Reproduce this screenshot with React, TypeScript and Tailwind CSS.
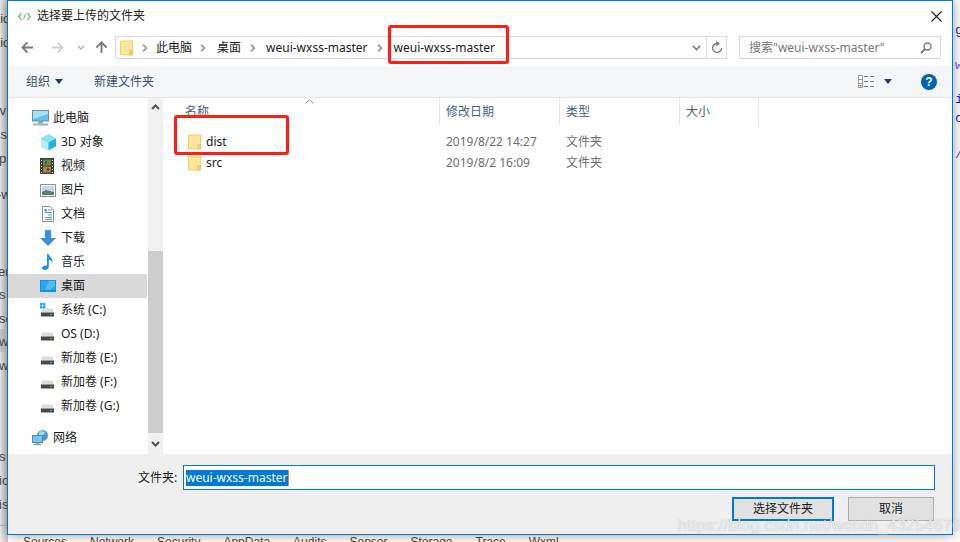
import React from "react";

const ui = "font-['Noto_Sans','Noto_Sans_CJK_SC',sans-serif]";

/* ---------- toolbar glyphs ---------- */
function Arrow({ dir, color }: { dir: "left" | "right" | "up"; color: string }) {
  const rot = dir === "left" ? 0 : dir === "right" ? 180 : 90;
  return (
    <svg width="13" height="13" viewBox="0 0 14 14" style={{ transform: `rotate(${rot}deg)` }}>
      <path d="M1.5 7H13M7 1.5L1.5 7L7 12.5" fill="none" stroke={color} strokeWidth="2" />
    </svg>
  );
}

function Chevron() {
  return (
    <svg width="6" height="8" viewBox="0 0 6 8">
      <path d="M1 .8L4.4 4L1 7.2" fill="none" stroke="#8a8a8a" strokeWidth="1.5" />
    </svg>
  );
}

function Caret({ color = "#2b3a55" }: { color?: string }) {
  return (
    <svg width="8" height="5" viewBox="0 0 8 5">
      <path d="M0 0H8L4 5Z" fill={color} />
    </svg>
  );
}

function Folder({ w = 14, h = 16 }: { w?: number; h?: number }) {
  return (
    <svg width={w} height={h} viewBox="0 0 14 16">
      <path d="M.5 .5H13.5V15.5H.5Z" fill="#fde69a" stroke="#eccb6a" />
      <path d="M10.5 11H13.5V15.5H10.5Z" fill="#f5d476" stroke="#e3bd55" strokeWidth=".7" />
    </svg>
  );
}

/* ---------- navigation pane glyphs ---------- */
function Monitor() {
  return (
    <svg width="17" height="16" viewBox="0 0 17 16">
      <rect x=".5" y=".5" width="16" height="10.5" fill="#5cc3f2" stroke="#6c8ca3" />
      <path d="M1 1H16V4L1 9Z" fill="#a5e2fa" />
      <rect x="6" y="11" width="5" height="2.5" fill="#9aa7b1" />
      <rect x="1" y="13.5" width="15" height="2" fill="#9fb0bd" />
    </svg>
  );
}

function Cube() {
  return (
    <svg width="17" height="17" viewBox="0 0 17 17">
      <path d="M8.5 .5L16 4.5V12.5L8.5 16.5L1 12.5V4.5Z" fill="#25b5d2" />
      <path d="M8.5 .5L16 4.5L8.5 8.5L1 4.5Z" fill="#8be4ee" />
      <path d="M1 4.5L8.5 8.5V16.5L1 12.5Z" fill="#b7f0f4" />
    </svg>
  );
}

function Film() {
  return (
    <svg width="14" height="16" viewBox="0 0 14 16">
      <rect width="14" height="16" fill="#3d3d3d" />
      <rect x="3" y="1.5" width="8" height="6" fill="#6a8a3c" />
      <rect x="3" y="8.5" width="8" height="6" fill="#b5822f" />
      <path d="M5 3h2v3H5zM7 10h2v3H7z" fill="#2a58a8" />
      <path d="M1 2h1v1H1zM1 5h1v1H1zM1 8h1v1H1zM1 11h1v1H1zM1 14h1v1H1zM12 2h1v1h-1zM12 5h1v1h-1zM12 8h1v1h-1zM12 11h1v1h-1zM12 14h1v1h-1z" fill="#eee" />
    </svg>
  );
}

function PictureIcon() {
  return (
    <svg width="16" height="13" viewBox="0 0 16 13">
      <rect x=".5" y=".5" width="15" height="12" fill="#fff" stroke="#8e9396" />
      <rect x="2" y="2" width="12" height="9" fill="#c3dbe4" />
      <path d="M2 8L6 6L14 8V11H2Z" fill="#5d8070" />
    </svg>
  );
}

function DocIcon() {
  return (
    <svg className="ml-[2px]" width="12" height="16" viewBox="0 0 12 16">
      <path d="M.5 .5H8L11.5 4V15.5H.5Z" fill="#fff" stroke="#8b8f92" />
      <path d="M6 4h4M3 6.5h7M6 9h4M3 11.5h7M3 13.5h7" stroke="#4f9ad4" />
      <rect x="2.5" y="3" width="2.5" height="2.5" fill="#4f9ad4" />
    </svg>
  );
}

function DownloadIcon() {
  return (
    <svg width="16" height="16" viewBox="0 0 16 16">
      <path d="M5 0H11V8H16L8 16L0 8H5Z" fill="#3d8fdc" />
    </svg>
  );
}

function NoteIcon() {
  return (
    <svg className="ml-[2px]" width="12" height="16" viewBox="0 0 12 16">
      <path d="M5 0H6.6C7 3 11.5 4 10.5 9C10 6.5 8 6 6.8 5.5V13C6.8 15 4.5 16 2.5 16C.8 16 0 15 0 14C0 12.3 2.5 11 5 11.6Z" fill="#1e90e0" />
    </svg>
  );
}

function DesktopIcon() {
  return (
    <svg width="16" height="12" viewBox="0 0 16 12">
      <rect width="16" height="12" fill="#1c8fe4" />
      <rect x="1" y="1" width="14" height="9" fill="#2ba6f4" />
      <path d="M9 1H15V5L10 10H5Z" fill="#55bdf8" />
    </svg>
  );
}

function Drive({ win }: { win?: boolean }) {
  return (
    <svg width="15" height="15" viewBox="0 0 15 15">
      {win && <path d="M0 0h2.5v2.5H0zM3 0h2.5v2.5H3zM0 3h2.5v2.5H0zM3 3h2.5v2.5H3z" fill="#18a7e8" />}
      <path d="M2.5 5.5H12.5L14 9.5H1Z" fill="#dcdcdc" />
      <rect x="1" y="9.5" width="13" height="4" fill="#4a4a4a" />
      <rect x="10.5" y="11" width="1.5" height="1" fill="#52e052" />
    </svg>
  );
}

function Globe() {
  return (
    <svg width="17" height="16" viewBox="0 0 17 16">
      <circle cx="10.5" cy="5.5" r="5.5" fill="#4e9ad0" />
      <path d="M7 2C9 0 12 1 13 3L10 6L7 5Z" fill="#a4d4ec" />
      <rect x=".5" y="5.5" width="10" height="7" fill="#6ec5f0" stroke="#5f8aa6" />
      <rect x="3.5" y="13" width="4" height="1" fill="#8fa3b1" />
      <rect x="1.5" y="14" width="8" height="1.2" fill="#8fa3b1" />
    </svg>
  );
}

/* ---------- navigation data ---------- */
const libraries: [React.ReactNode, string][] = [
  [<Cube />, "3D 对象"],
  [<Film />, "视频"],
  [<PictureIcon />, "图片"],
  [<DocIcon />, "文档"],
  [<DownloadIcon />, "下载"],
  [<NoteIcon />, "音乐"],
];

const drives: [boolean, string][] = [
  [true, "系统 (C:)"],
  [false, "OS (D:)"],
  [false, "新加卷 (E:)"],
  [false, "新加卷 (F:)"],
  [false, "新加卷 (G:)"],
];

function NavRow({ icon, label, active }: { icon: React.ReactNode; label: string; active?: boolean }) {
  return (
    <div className={`mr-px flex h-6 items-center pl-[32px] ${active ? "bg-[#d9d9d9]" : ""}`}>
      <span className="flex w-[21px] shrink-0 justify-start">{icon}</span>
      <span className="text-[12px] text-[#1a1a1a]">{label}</span>
    </div>
  );
}

function Nav() {
  return (
    <div className="flex w-[140px] shrink-0 flex-col pt-[8px]">
      <div className="flex h-6 items-center pl-[24px]">
        <span className="flex w-[21px] shrink-0 justify-start"><Monitor /></span>
        <span className="text-[12px] text-[#1a1a1a]">此电脑</span>
      </div>
      {libraries.map(([icon, label]) => (
        <NavRow key={label} icon={icon} label={label} />
      ))}
      <NavRow icon={<DesktopIcon />} label="桌面" active />
      {drives.map(([win, label]) => (
        <NavRow key={label} icon={<Drive win={win} />} label={label} />
      ))}
      <div className="mt-2 flex h-6 items-center pl-[24px]">
        <span className="flex w-[21px] shrink-0 justify-start"><Globe /></span>
        <span className="text-[12px] text-[#1a1a1a]">网络</span>
      </div>
    </div>
  );
}

function ScrollBar() {
  return (
    <div className="flex w-[15px] shrink-0 flex-col bg-[#f0f0f0]">
      <div className="flex h-[17px] items-center justify-center">
        <svg width="9" height="6" viewBox="0 0 9 6"><path d="M1 5L4.5 1.5L8 5" fill="none" stroke="#505050" strokeWidth="2" /></svg>
      </div>
      <div className="h-[136px]" />
      <div className="h-[182px] bg-[#cdcdcd]" />
      <div className="flex flex-1 items-center justify-center">
        <svg width="9" height="6" viewBox="0 0 9 6"><path d="M1 1L4.5 4.5L8 1" fill="none" stroke="#505050" strokeWidth="2" /></svg>
      </div>
    </div>
  );
}

function FileRow({ name, date }: { name: string; date: string }) {
  return (
    <div className="grid h-[21px] grid-cols-[273px_120px_120px] items-center text-[12px]">
      <div className="flex items-center gap-[5px] pl-[22px]">
        <Folder w={13} h={16} />
        <span className="text-[#1a1a1a]">{name}</span>
      </div>
      <span className="pl-[7px] text-[#6d6d6d]">{date}</span>
      <span className="pl-[7px] text-[#6d6d6d]">文件夹</span>
    </div>
  );
}

function FileList() {
  return (
    <div className="ml-[3px] flex min-w-0 flex-1 flex-col">
      <div className="relative grid h-[27px] grid-cols-[273px_120px_120px_80px] text-[12px] text-[#4c607a]">
        <span className="pl-[19px] pt-[5px]">名称</span>
        <span className="border-l border-[#e5e5e5] pl-[6px] pt-[5px]">修改日期</span>
        <span className="border-l border-[#e5e5e5] pl-[6px] pt-[5px]">类型</span>
        <span className="border-x border-[#e5e5e5] pl-[6px] pt-[5px]">大小</span>
        <svg className="absolute left-[139px] top-[1px]" width="9" height="5" viewBox="0 0 9 5">
          <path d="M.5 4.5L4.5 .8L8.5 4.5" fill="none" stroke="#8a8a8a" />
        </svg>
      </div>
      <div className="pt-[6px]">
        <FileRow name="dist" date="2019/8/22 14:27" />
        <FileRow name="src" date="2019/8/2 16:09" />
      </div>
    </div>
  );
}

function AddressRow() {
  return (
    <div className="flex h-[23px] items-center">
      <div className="flex w-[107px] items-center pl-[13px]">
        <Arrow dir="left" color="#7a7a7a" />
        <span className="ml-[17px]"><Arrow dir="right" color="#d0d0d0" /></span>
        <svg className="ml-[13px]" width="8" height="5" viewBox="0 0 8 5"><path d="M.8 .8L4 4L7.2 .8" fill="none" stroke="#b0b0b0" strokeWidth="1.4" /></svg>
        <span className="ml-[10px]"><Arrow dir="up" color="#7a7a7a" /></span>
      </div>
      <div className="flex h-[23px] w-[612px] items-center border border-[#d9d9d9] text-[12px] text-[#1a1a1a]">
        <span className="ml-[4px]"><Folder w={13} h={16} /></span>
        <span className="ml-[9px]"><Chevron /></span>
        <span className="ml-[8px]">此电脑</span>
        <span className="ml-[8px]"><Chevron /></span>
        <span className="ml-[11px]">桌面</span>
        <span className="ml-[9px]"><Chevron /></span>
        <span className="ml-[10px]">weui-wxss-master</span>
        <span className="ml-[9px]"><Chevron /></span>
        <span className="ml-[11px]">weui-wxss-master</span>
        <span className="ml-auto flex w-[20px] justify-center">
          <svg width="9" height="6" viewBox="0 0 9 6"><path d="M.8 .8L4.5 4.5L8.2 .8" fill="none" stroke="#777" strokeWidth="1.6" /></svg>
        </span>
        <span className="flex h-full w-[20px] items-center justify-center border-l border-[#d9d9d9]">
          <svg width="12" height="13" viewBox="0 0 12 13">
            <path d="M7 2.6A4.5 4.5 0 1 0 10.6 7" fill="none" stroke="#7a7a7a" strokeWidth="1.4" />
            <path d="M5 0L9 2.6L5.5 5.5Z" fill="#7a7a7a" />
          </svg>
        </span>
      </div>
      <div className="ml-[12px] flex h-[23px] w-[202px] items-center border border-[#d9d9d9] pl-[9px] pr-[8px] text-[12px] text-[#777]">
        <span>搜索"weui-wxss-master"</span>
        <svg className="ml-auto" width="12" height="12" viewBox="0 0 12 12">
          <circle cx="7.5" cy="4.5" r="3.5" fill="none" stroke="#7a7a7a" strokeWidth="1.4" />
          <path d="M5 7L1 11" stroke="#7a7a7a" strokeWidth="2" />
        </svg>
      </div>
    </div>
  );
}

function CommandBar() {
  return (
    <div className="mt-[7px] flex h-[32px] items-center border-b border-[#e5e5e5] bg-[#f4f5f7] pl-[18px] pr-[15px] text-[12px] text-[#3e4d66]">
      <span>组织</span>
      <span className="ml-[5px]"><Caret /></span>
      <span className="ml-[31px]">新建文件夹</span>
      <svg className="ml-auto" width="17" height="13" viewBox="0 0 17 13">
        <rect x=".5" y=".5" width="4" height="12" fill="#fff" stroke="#9a9a9a" />
        <path d="M1 4.5h3M1 8.5h3" stroke="#9a9a9a" />
        <rect x="1.5" y="10" width="2" height="1.5" fill="#d64545" />
        <path d="M6 1.5h4M12 1.5h4M6 6.5h4M12 6.5h4M6 11.5h4M12 11.5h4" stroke="#7d7d7d" />
      </svg>
      <span className="ml-[9px]"><Caret /></span>
      <span className="ml-[29px] flex h-4 w-4 items-center justify-center rounded-full bg-[#0063b1] font-['Liberation_Sans',sans-serif] text-[12px] font-bold text-white">?</span>
    </div>
  );
}

function Footer() {
  return (
    <div className="flex h-[80px] flex-col bg-[#efefef] pr-[17px] pt-[11px] text-[12px]">
      <div className="flex h-[25px] items-center">
        <span className="ml-[130px] w-[45px] text-[#1a1a1a]">文件夹:</span>
        <div className="flex h-[25px] flex-1 items-center border border-[#0078d7] bg-white pl-[2px]">
          <span className="flex h-4 items-center border-r border-[#e8863c] bg-[#0078d7] pr-px leading-none text-white">weui-wxss-master</span>
        </div>
      </div>
      <div className="mr-px mt-[7px] flex justify-end gap-[14px] text-[#1a1a1a]">
        <button className="h-6 w-[102px] border-2 border-[#0078d7] bg-[#e1e1e1]">选择文件夹</button>
        <button className="h-6 w-[86px] border border-[#adadad] bg-[#e1e1e1]">取消</button>
      </div>
    </div>
  );
}

/* ---------- the file-picker window ---------- */
function FolderDialog() {
  return (
    <div className={`absolute left-[7px] top-0 flex h-[535px] w-[946px] flex-col border border-[#0078d7] bg-white shadow-[0_0_12px_rgba(0,0,0,0.4)] ${ui}`}>
      <div className="flex h-[29px] shrink-0 items-center pl-[10px] pr-[10px] pt-[1px]">
        <svg width="13" height="9" viewBox="0 0 13 9">
          <path d="M3.5 1L.8 4.5L3.5 8M9.5 1L12.2 4.5L9.5 8" fill="none" stroke="#5ed05e" strokeWidth="1.4" />
          <path d="M7.4 1.5L5.6 7.5" stroke="#a0a0a0" />
        </svg>
        <span className="ml-[6px] text-[12px] text-[#222]">选择要上传的文件夹</span>
        <svg className="ml-auto" width="11" height="11" viewBox="0 0 11 11">
          <path d="M.5 .5L10.5 10.5M10.5 .5L.5 10.5" stroke="#1a1a1a" strokeWidth="1.1" />
        </svg>
      </div>
      <div className="mt-[6px]"><AddressRow /></div>
      <CommandBar />
      <div className="flex min-h-0 flex-1">
        <Nav />
        <ScrollBar />
        <FileList />
      </div>
      <Footer />
    </div>
  );
}

/* ---------- red annotation frames and blog watermark ---------- */
function Annotations() {
  return (
    <>
      <div className="absolute left-[388px] top-[25px] h-[39px] w-[121px] rounded-[3px] border-[3px] border-[#ff1e14]" />
      <div className="absolute left-[174px] top-[115px] h-[40px] w-[115px] rounded-[3px] border-[3px] border-[#ff1e14]" />
      <span className="absolute left-[678px] top-[514px] font-['Liberation_Sans',sans-serif] text-[16px] tracking-[0.3px] text-[rgba(255,255,255,0.75)] [text-shadow:0_0_1px_rgba(120,120,120,0.6)]">
        https://blog.csdn.net/weixin_43254676
      </span>
    </>
  );
}

/* ---------- page behind the window ---------- */
function Backdrop() {
  const code = "absolute left-[955px] font-['Liberation_Mono',monospace] text-[13px] text-[#1a1ae0]";
  const edge = "absolute whitespace-nowrap text-[13px] text-[#4b4b4b]";
  return (
    <div className="absolute inset-0 overflow-hidden bg-white font-['Liberation_Sans',sans-serif]">
      <div className="absolute left-0 top-0 h-full w-2 bg-gradient-to-r from-[#f0f0f0] to-[#c4c4c4]" />
      <div className="absolute left-0 top-[329px] h-[23px] w-2 bg-[#cfcfcf]" />
      <div className="absolute left-0 top-[525px] h-px w-2 bg-[#b8b8b8]" />
      <span className={`${edge} left-[-7px] top-[9px]`}>aid</span>
      <span className={`${edge} left-[-7px] top-[33px]`}>aid</span>
      <span className={`${edge} left-[-7px] top-[101px]`}>vv</span>
      <span className={`${edge} left-[-6px] top-[125px]`}>ss</span>
      <span className={`${edge} left-[-1px] top-[149px]`}>pa</span>
      <span className={`${edge} left-[-3px] top-[185px]`}>-w</span>
      <span className={`${edge} left-[-2px] top-[262px]`}>er</span>
      <span className={`${edge} left-[-1px] top-[285px]`}>s</span>
      <span className={`${edge} left-[-1px] top-[309px]`}>so</span>
      <span className={`${edge} left-[-1px] top-[332px]`}>wx</span>
      <span className={`${edge} left-[-1px] top-[356px]`}>wx</span>
      <span className={`${edge} left-[-1px] top-[447px]`}>s</span>
      <span className={`${edge} left-[-1px] top-[471px]`}>io</span>
      <span className={`${edge} left-[-1px] top-[495px]`}>is</span>

      <span className={`${code} top-[21px]`}>g</span>
      <span className={`${code} top-[56px] text-[#7a5ae0]`}>w</span>
      <span className={`${code} top-[90px]`}>i</span>
      <span className={`${code} top-[109px]`}>c</span>
      <span className={`${code} top-[145px] text-[#6a3ae0]`}>/</span>

      <div className="absolute left-[23px] top-[533px] flex gap-[23px] whitespace-nowrap text-[12px] text-[#4b4b4b]">
        <span>Sources</span>
        <span>Network</span>
        <span>Security</span>
        <span>AppData</span>
        <span>Audits</span>
        <span>Sensor</span>
        <span>Storage</span>
        <span>Trace</span>
        <span>Wxml</span>
      </div>
    </div>
  );
}

export default function App() {
  return (
    <div className="relative h-[542px] w-[960px] overflow-hidden">
      <Backdrop />
      <FolderDialog />
      <Annotations />
    </div>
  );
}
